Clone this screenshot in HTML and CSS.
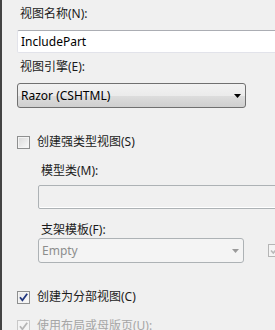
FILE: index.html
```html
<!DOCTYPE html>
<html>
<head>
<meta charset="utf-8">
<link rel="stylesheet" href="styles.css">
</head>
<body>
<div class="frame">
  <div class="label l1">视图名称(N):</div>
  <div class="textbox">IncludePart</div>
  <div class="label l2">视图引擎(E):</div>
  <div class="select">
    <span>Razor (CSHTML)</span>
    <svg class="arrow" width="7" height="4" viewBox="0 0 7 4"><path d="M0 0H7L3.5 4Z" fill="#000"/></svg>
  </div>
  <div class="check-row r1">
    <span class="cb"></span>
    <span class="cb-text">创建强类型视图(S)</span>
  </div>
  <div class="sub">
    <div class="label l3">模型类(M):</div>
    <div class="textbox disabled"></div>
    <div class="label l4">支架模板(F):</div>
    <div class="sel-row">
      <div class="select disabled">
        <span>Empty</span>
        <svg class="arrow" width="7" height="4" viewBox="0 0 7 4"><path d="M0 0H7L3.5 4Z" fill="#9a9a9a"/></svg>
      </div>
      <span class="cb small-dis">
        <svg width="11" height="11" viewBox="0 0 11 11"><path d="M2 5.5L4.3 8L9 2.5" stroke="#b9b9b9" stroke-width="1.6" fill="none"/></svg>
      </span>
    </div>
  </div>
  <div class="check-row r2">
    <span class="cb checked">
      <svg width="11" height="11" viewBox="0 0 11 11"><path d="M2 5.3L4.4 8.2L9.2 1.8" stroke="#21367e" stroke-width="1.8" fill="none"/></svg>
    </span>
    <span class="cb-text">创建为分部视图(C)</span>
  </div>
  <div class="check-row r3">
    <span class="cb dis">
      <svg width="11" height="11" viewBox="0 0 11 11"><path d="M2 5.3L4.4 8.2L9.2 1.8" stroke="#b5b5b5" stroke-width="1.8" fill="none"/></svg>
    </span>
    <span class="cb-text grey">使用布局或母版页(U):</span>
  </div>
</div>
</body>
</html>
```
FILE: styles.css
```css
html, body {
  margin: 0;
  padding: 0;
  overflow: hidden;
  background: #f0f0f0;
}
body {
  width: 275px;
  height: 330px;
}
.frame {
  box-sizing: border-box;
  height: 330px;
  border-left: 2px solid #434343;
  padding-left: 15px;
  font-family: "Noto Sans", "Noto Sans CJK SC", sans-serif;
  font-size: 12px;
  color: #1b1b1b;
  overflow: hidden;
}
.label {
  line-height: 16px;
  height: 16px;
  padding-left: 3px;
}
.l1 { margin-top: 6px; }
.l2 { margin-top: 6px; }
.textbox {
  box-sizing: border-box;
  margin-top: 8px;
  height: 23px;
  width: 300px;
  background: #fff;
  border: 1px solid #e2e3ea;
  border-top-color: #abadb3;
  border-radius: 2px;
  padding-left: 3px;
  line-height: 21px;
  color: #000;
}
.select {
  box-sizing: border-box;
  margin-top: 8px;
  height: 25px;
  width: 229px;
  border: 1px solid #707070;
  border-radius: 3px;
  background: linear-gradient(#f2f2f2 0%, #ebebeb 50%, #dddddd 51%, #cfcfcf 100%);
  display: flex;
  align-items: center;
  justify-content: space-between;
  padding: 0 4px 0 3px;
  color: #000;
  flex: none;
}
.arrow { flex: none; }
.check-row {
  display: flex;
  align-items: center;
  height: 16px;
  gap: 7px;
  white-space: nowrap;
}
.r1 { margin-top: 26px; }
.r2 { margin-top: 26px; }
.r3 { margin-top: 13px; }
.cb {
  box-sizing: border-box;
  width: 13px;
  height: 13px;
  border: 1px solid #8e8f8f;
  background: linear-gradient(135deg, #d8d8d8, #fafafa);
  box-shadow: inset 0 0 0 1px #f4f4f4;
  display: flex;
  align-items: center;
  justify-content: center;
  flex: none;
}
.cb.checked {
  background: linear-gradient(135deg, #e6e6e6, #fbfbfb);
}
.cb.dis {
  border-color: #c8c8c8;
  background: #f4f4f4;
}
.cb-text { line-height: 16px; }
.grey { color: #a6a6a6; }
.sub { padding-left: 21px; }
.l3 { margin-top: 13px; padding-left: 3px; }
.sub .textbox.disabled {
  margin-top: 6px;
  height: 24px;
  width: 260px;
  background: #f0f0f0;
  border: 1px solid #adb2b5;
  box-shadow: inset 0 -1px 0 #fff;
}
.l4 { margin-top: 13px; }
.sel-row {
  display: flex;
  align-items: center;
  gap: 24px;
  margin-top: 0;
  width: 260px;
}
.select.disabled {
  margin-top: 0;
  width: 206px;
  height: 25px;
  border-color: #adb2b5;
  background: #f4f4f4;
  color: #8d8d8d;
}
.small-dis {
  margin-top: 0;
  border-color: #b5b5b5;
  background: #f4f4f4;
}
```
